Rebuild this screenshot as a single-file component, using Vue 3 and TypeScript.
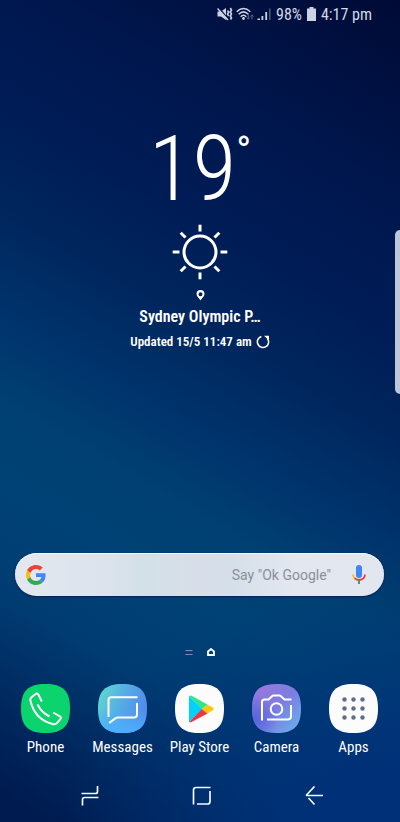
<script setup lang="ts">
import { ref } from 'vue'

interface AppEntry {
  id: 'phone' | 'messages' | 'play' | 'camera' | 'apps'
  label: string
}

const apps: AppEntry[] = [
  { id: 'phone', label: 'Phone' },
  { id: 'messages', label: 'Messages' },
  { id: 'play', label: 'Play Store' },
  { id: 'camera', label: 'Camera' },
  { id: 'apps', label: 'Apps' },
]

const gridDots = [15, 24, 33]
const sunRays = [0, 45, 90, 135, 180, 225, 270, 315]
const query = ref('')
</script>

<template>
  <div class="screen">
    <header class="status">
      <div class="signals">
        <svg width="16" height="14" viewBox="0 0 16 14" aria-hidden="true">
          <path d="M.5 4.500h3.500L9 1v12L4 9.500H.5z" fill="#ccd2e2" />
          <path d="M1.500.500l10 12" stroke="#000e40" stroke-width="1.500" />
          <path d="M.5 1.500l10.500 11.500" stroke="#ccd2e2" stroke-width="1.500" />
          <path d="M10.500 3.500l1.200 1.500-1.200 2 1.200 2M13.300 1l1.200 2-1.200 2 1.200 2-1.200 2 1.200 2-1 1.500" fill="none" stroke="#ccd2e2" stroke-width="1.600" />
        </svg>
        <svg width="18" height="14" viewBox="0 0 18 14" aria-hidden="true">
          <g fill="none" stroke="#ccd2e2" stroke-width="1.500">
            <path d="M.7 4.700Q7.500-1.800 14.300 4.700" />
            <path d="M2.700 7.200Q7.500 2.500 12.300 7.200" />
            <path d="M4.700 9.700Q7.500 6.700 10.300 9.700" />
          </g>
          <circle cx="7.500" cy="11.500" r="1.400" fill="#ccd2e2" />
          <path d="M12.300 7v5M10.800 10.500l1.500 1.700 1.500-1.700M16 12.500V8M14.500 9.500L16 7.800l1.500 1.700" fill="none" stroke="#596887" />
        </svg>
        <svg width="14" height="14" viewBox="0 0 14 14" aria-hidden="true">
          <path d="M.5 11.500h2.500V13H.5zM4.500 9h1.800v4H4.500zM8.300 5h1.800v8H8.300z" fill="#ccd2e2" />
          <path d="M12 1.500h1.600v11.500H12z" fill="#485675" />
        </svg>
      </div>
      <span>98%</span>
      <svg width="9" height="14" viewBox="0 0 9 14" aria-hidden="true">
        <path d="M2.500 0h4v1.500H9V14H0V1.500h2.500z" fill="#ccd2e2" />
      </svg>
      <time>4:17 pm</time>
    </header>

    <section class="weather">
      <p class="temp">19<span class="degree">°</span></p>
      <svg width="56" height="56" viewBox="-28 -28 56 56" aria-hidden="true">
        <circle r="16" fill="none" stroke="#fff" stroke-width="3" />
        <path v-for="a in sunRays" :key="a" d="M0-20.500v-6.800" :transform="`rotate(${a})`" stroke="#fff" stroke-width="3" />
      </svg>
      <svg class="pin" width="9" height="11" viewBox="0 0 9 11" aria-hidden="true">
        <path d="M4.500 0a4 4 0 0 0-4 4c0 2.600 2.600 4 4 6.500C5.900 8 8.500 6.600 8.500 4a4 4 0 0 0-4-4zm0 2.200a2 2 0 1 1 0 4 2 2 0 0 1 0-4z" fill="#fff" fill-rule="evenodd" />
      </svg>
      <p class="city">Sydney Olympic P…</p>
      <div class="updated">
        <span>Updated 15/5 11:47 am</span>
        <button type="button" aria-label="Refresh weather">
          <svg width="14" height="14" viewBox="0 0 14 14">
            <path d="M5.400 1.500A5.600 5.600 0 1 0 11.300 3.300" fill="none" stroke="#fff" stroke-width="1.600" />
            <path d="M8 .8h5v4.500z" fill="#fff" />
          </svg>
        </button>
      </div>
    </section>

    <form class="search" @submit.prevent>
      <svg width="20" height="20" viewBox="0 0 48 48" aria-hidden="true">
        <path fill="#EA4335" d="M24 9.500c3.540 0 6.710 1.220 9.210 3.600l6.850-6.850C35.900 2.380 30.470 0 24 0 14.620 0 6.510 5.380 2.560 13.220l7.980 6.190C12.430 13.720 17.740 9.500 24 9.500z" />
        <path fill="#4285F4" d="M46.980 24.550c0-1.570-.15-3.090-.38-4.550H24v9.020h12.940c-.58 2.960-2.260 5.480-4.780 7.180l7.730 6c4.510-4.180 7.090-10.360 7.090-17.650z" />
        <path fill="#FBBC05" d="M10.530 28.590c-.48-1.450-.76-2.990-.76-4.590s.27-3.140.76-4.590l-7.980-6.190C.92 16.460 0 20.120 0 24c0 3.880.92 7.540 2.560 10.780l7.970-6.190z" />
        <path fill="#34A853" d="M24 48c6.480 0 11.930-2.130 15.890-5.810l-7.730-6c-2.150 1.450-4.920 2.300-8.160 2.300-6.260 0-11.570-4.220-13.470-9.910l-7.980 6.190C6.510 42.620 14.620 48 24 48z" />
      </svg>
      <input v-model="query" type="text" aria-label="Search" placeholder="Say &quot;Ok Google&quot;" />
      <button type="button" aria-label="Voice search">
        <svg width="14" height="20" viewBox="0 0 14 20">
          <rect x="4" y="0" width="6" height="13" rx="3" fill="#4285f4" />
          <path d="M1 9.500q.2 2.500 2 4" fill="none" stroke="#fbbc05" stroke-width="1.800" />
          <path d="M2.600 13.200q4.400 3.600 8.800 0Q13 11.800 13 9.500" fill="none" stroke="#ea4335" stroke-width="1.800" />
          <path d="M7 15.500V19" stroke="#34a853" stroke-width="2" />
        </svg>
      </button>
    </form>

    <nav class="pages" aria-label="Home pages">
      <button type="button" aria-label="Feed">
        <svg width="8" height="8" viewBox="0 0 8 8"><path d="M.5 2.500h7M.5 6.500h7" stroke="#7890b0" stroke-width="1.200" /></svg>
      </button>
      <button type="button" aria-label="Home page">
        <svg width="8" height="8" viewBox="0 0 8 8"><path d="M1 3.500L4 1l3 2.500V7H1z" fill="none" stroke="#fff" stroke-width="1.800" /></svg>
      </button>
    </nav>

    <main class="dock">
      <a v-for="app in apps" :key="app.id" class="app" href="#">
        <svg width="49" height="49" viewBox="0 0 49 49" aria-hidden="true">
          <defs>
            <linearGradient id="messages-fill" x1="0" y1="0.200" x2="1" y2="0.600">
              <stop offset="0" stop-color="#5fd8cf" />
              <stop offset="0.450" stop-color="#56aee5" />
              <stop offset="1" stop-color="#5186eb" />
            </linearGradient>
            <linearGradient id="messages-glow" x1="0" y1="0" x2="0" y2="1">
              <stop offset="0.500" stop-color="#4cb0ff" stop-opacity="0" />
              <stop offset="1" stop-color="#4cb0ff" />
            </linearGradient>
            <linearGradient id="camera-fill" x1="0" y1="0" x2="1" y2="1">
              <stop offset="0" stop-color="#a177dd" />
              <stop offset="0.500" stop-color="#7b7de0" />
              <stop offset="1" stop-color="#68b4ee" />
            </linearGradient>
            <radialGradient id="camera-glow" cx="0.050" cy="0.700" r="0.500">
              <stop offset="0" stop-color="#5664df" />
              <stop offset="1" stop-color="#5664df" stop-opacity="0" />
            </radialGradient>
          </defs>

          <g v-if="app.id === 'phone'">
            <path class="green" d="M24.500 0C42 0 49 7 49 24.500S42 49 24.500 49 0 42 0 24.500 7 0 24.500 0z" />
            <g class="line">
              <path d="M20.800 17.500L17.500 10.800Q16.200 8.700 14.300 10.200L10.500 13.300Q8.800 14.700 9.600 17.500C12.500 29 20 37 31.500 40Q34.500 40.700 36.300 38.600L39.500 35Q40.500 33.500 39 32.500L32.200 28.500" />
              <path d="M16.500 20.500Q20.500 28.500 28.500 32.500" />
            </g>
          </g>

          <g v-else-if="app.id === 'messages'">
            <path d="M24.500 0C42 0 49 7 49 24.500S42 49 24.500 49 0 42 0 24.500 7 0 24.500 0z" fill="url(#messages-fill)" />
            <path d="M24.500 0C42 0 49 7 49 24.500S42 49 24.500 49 0 42 0 24.500 7 0 24.500 0z" fill="url(#messages-glow)" />
            <path class="line" d="M10.500 33V16q0-2.800 2.800-2.800H39.500M39 19V30.500q0 3-3 3H20.500Q18.500 33.500 17 34.600L11.200 39" />
          </g>

          <g v-else-if="app.id === 'play'">
            <path class="white" d="M24.500 0C42 0 49 7 49 24.500S42 49 24.500 49 0 42 0 24.500 7 0 24.500 0z" />
            <path d="M14 12L27.500 25 14 38z" fill="#00d2ff" />
            <path d="M14 12q1-1 3 0L32.500 20.500 27 25z" fill="#2ee68b" />
            <path d="M14 38q1 .800 3-.300L32.500 29.500 27 25z" fill="#f0353f" />
            <path d="M32.300 20.500L38 23.600q1.500 1.300 0 2.600L32.300 29.500 27 25z" fill="#ffc60b" />
          </g>

          <g v-else-if="app.id === 'camera'">
            <path d="M24.500 0C42 0 49 7 49 24.500S42 49 24.500 49 0 42 0 24.500 7 0 24.500 0z" fill="url(#camera-fill)" />
            <path d="M24.500 0C42 0 49 7 49 24.500S42 49 24.500 49 0 42 0 24.500 7 0 24.500 0z" fill="url(#camera-glow)" />
            <path class="line" d="M10 36.500V18q0-2.500 2.500-2.500H16.500L20 12.200q.600-.600 1.500-.600H27.500q.900 0 1.500.600L32.500 15.500H39.500M39 21V32q0 3.500-3.500 3.500H15" />
            <circle class="line" cx="24.500" cy="25" r="5.800" />
          </g>

          <g v-else>
            <path class="white" d="M24.500 0C42 0 49 7 49 24.500S42 49 24.500 49 0 42 0 24.500 7 0 24.500 0z" />
            <template v-for="y in gridDots" :key="y">
              <circle v-for="x in gridDots" :key="x" :cx="x + 0.500" :cy="y + 0.500" r="2.200" fill="#5f6d85" />
            </template>
          </g>
        </svg>
        <span>{{ app.label }}</span>
      </a>
    </main>

    <nav class="keys" aria-label="System">
      <button type="button" aria-label="Recent apps">
        <svg width="20" height="20" viewBox="0 0 20 20"><path d="M1.500 7.500H15.500q2 0 2-2V0M18.500 11.500H4.500q-2 0-2 2V19.500" /></svg>
      </button>
      <button type="button" aria-label="Home">
        <svg width="20" height="20" viewBox="0 0 20 20"><path d="M1.500 18.500V4q0-2.500 2.500-2.500H18.500M18 5V15.500q0 2.500-2.500 2.500H5" /></svg>
      </button>
      <button type="button" aria-label="Back">
        <svg width="20" height="20" viewBox="0 0 20 20"><path d="M19 9.500H2M10.500.500L2 9.500M4.500 12L10.500 18.500" /></svg>
      </button>
    </nav>

    <button class="edge" type="button" aria-label="Edge panel"></button>
  </div>
</template>

<style>
body {
  margin: 0;
}
</style>

<style scoped>
.screen {
  position: relative;
  display: flex;
  flex-direction: column;
  min-height: 100vh;
  box-sizing: border-box;
  overflow: hidden;
  color: #fff;
  font-family: "Roboto Condensed", Roboto, sans-serif;
  background:
    radial-gradient(ellipse 85% 28% at 100% 100%, #003078 20%, rgba(0, 48, 120, 0) 100%),
    linear-gradient(210deg, #000a35 0%, #00174e 20%, #001c56 32%, #00265e 42%, #00346c 52%, #004072 60%, #004275 68%, #003c72 78%, #002a60 88%, #001b50 97%);
}

p {
  margin: 0;
}

button {
  display: flex;
  align-items: center;
  justify-content: center;
  padding: 0;
  border: 0;
  background: none;
  color: inherit;
}

.status {
  display: flex;
  align-items: center;
  justify-content: flex-end;
  gap: 5px;
  height: 28px;
  padding-right: 28px;
  color: #d3d9e8;
  font-size: 16px;
}

.signals {
  display: flex;
  gap: 3px;
}

.weather {
  display: flex;
  flex-direction: column;
  align-items: center;
  padding-top: 96px;
}

.temp {
  display: flex;
  height: 100px;
  font-size: 90px;
  font-weight: 300;
  line-height: 92px;
}

.degree {
  font-size: 40px;
  font-weight: 400;
  line-height: 56px;
}

.pin {
  margin-top: 10px;
}

.city {
  margin-top: 4px;
  font-size: 16px;
  font-weight: 600;
  line-height: 24px;
}

.updated {
  display: flex;
  align-items: center;
  gap: 4px;
  font-size: 13px;
  font-weight: 600;
  line-height: 26px;
}

.search {
  display: flex;
  align-items: center;
  height: 43px;
  box-sizing: border-box;
  margin: auto 16px 0 15px;
  padding: 0 18px 0 11px;
  border-radius: 22px;
  background: linear-gradient(90deg, #e3e8f0 0%, #dde3ec 23%, #d3e0e8 35%, #d8dee9 50%, #d5dfe9 58%, #e2e7f0 75%, #e2e7ef 100%);
  box-shadow: inset 0 1px 0 #f5f9ff, 0 1px 2px rgba(0, 15, 60, 0.6);
}

.search input {
  flex: 1;
  min-width: 0;
  padding: 0 21px 0 0;
  border: 0;
  outline: 0;
  background: none;
  color: #555c66;
  font-family: Roboto, sans-serif;
  font-size: 14px;
  text-align: right;
}

.search input::placeholder {
  color: #8b9098;
}

.pages {
  display: flex;
  justify-content: center;
  gap: 14px;
  padding: 52px 0 28px;
}

.dock {
  display: grid;
  grid-template-columns: repeat(5, 1fr);
  padding: 0 8px 0 7px;
}

.app {
  display: flex;
  flex-direction: column;
  align-items: center;
  gap: 4px;
  color: #fff;
  font-size: 15px;
  line-height: 20px;
  text-decoration: none;
  white-space: nowrap;
}

.green {
  fill: #0bd36d;
}

.white {
  fill: #fcfcfd;
}

.line {
  fill: none;
  stroke: #fff;
  stroke-width: 2;
}

.keys {
  display: grid;
  grid-template-columns: repeat(3, 1fr);
  height: 65px;
  box-sizing: border-box;
  padding: 12px 30px 0 34px;
}

.keys svg {
  fill: none;
  stroke: #f4f7fc;
  stroke-width: 1.7;
}

.edge {
  position: absolute;
  top: 230px;
  right: 0;
  width: 5px;
  height: 164px;
  border-radius: 5px 0 0 5px;
  background: #bec6d9;
}
</style>
